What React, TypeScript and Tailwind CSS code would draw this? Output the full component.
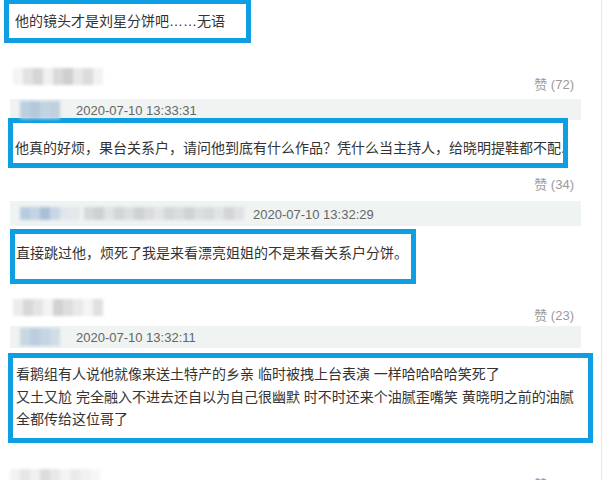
import React from 'react';

const font = { fontFamily: '"Liberation Sans", "Noto Sans CJK SC", sans-serif' };

// mosaic blocks standing in for blurred names / avatars
const Mosaic: React.FC<{ cells: string[]; h?: string }> = ({ cells, h = 'h-[16px]' }) => (
  <div className={`flex blur-[1.5px] ${h}`}>
    {cells.map((c, i) => (
      <div key={i} className="w-[10px] h-full" style={{ backgroundColor: c }} />
    ))}
  </div>
);

const nameCells = ['#f4f4f4', '#e2e2e2', '#d6d6d6', '#f0f0f0', '#dadada', '#cfcfcf', '#e8e8e8', '#dcdcdc', '#f2f2f2'];
const avatarCells = ['#bccfe0', '#b3c8dc', '#c2d3e2', '#bfd0df'];

const Likes: React.FC<{ n: number }> = ({ n }) => (
  <span className="text-[13px] leading-[16px] text-[#9a9a9a]">赞 ({n})</span>
);

const Bar: React.FC<{ children: React.ReactNode; className?: string }> = ({ children, className }) => (
  <div className={`ml-[10px] w-[571px] bg-[#eff3f2] flex items-center ${className ?? ''}`}>{children}</div>
);

const Date: React.FC<{ d: string }> = ({ d }) => (
  <span className="text-[13px] leading-[16px] text-[#666]">{d}</span>
);

export default function App() {
  return (
    <div className="w-[605px] h-[480px] overflow-hidden bg-white" style={font}>
      <div className="w-[602px] h-[480px] border-r border-[#e8e8e8] text-[#333]">
        <div className="ml-[4px] w-[247px] h-[43px] border-[5px] border-t-4 border-[#0d9fe1] pl-[6px] flex items-center text-[14px]">
          他的镜头才是刘星分饼吧……无语
        </div>

        <div className="mt-[25px] h-[18px] pl-[13px] pr-[27px] flex justify-between">
          <Mosaic cells={nameCells} h="h-[17px]" />
          <div className="mt-[4px]"><Likes n={72} /></div>
        </div>

        <Bar className="mt-[13px] h-[21px]">
          <div className="ml-[10px]"><Mosaic cells={avatarCells} h="h-[18px]" /></div>
          <div className="ml-[16px]"><Date d="2020-07-10 13:33:31" /></div>
        </Bar>

        <div className="-mt-[2px] ml-[8px] w-[560px] h-[50px] border-[5px] border-[#0d9fe1] pl-[2px] pb-[5px] flex items-end text-[14px] leading-[20px] whitespace-nowrap overflow-hidden">
          他真的好烦，果台关系户，请问他到底有什么作品？凭什么当主持人，给晓明提鞋都不配.
        </div>

        <div className="mt-[9px] h-[16px] pr-[27px] flex justify-end">
          <Likes n={34} />
        </div>

        <Bar className="mt-[8px] h-[25px]">
          <div className="ml-[10px] flex gap-[4px] items-center">
            <Mosaic cells={['#b8cce0', '#c4d4e3', '#a9c0d8', '#c8d7e5', '#dfe6ec', '#e4e8ea']} h="h-[13px]" />
            <Mosaic cells={['#d6d9da', '#cdd1d2', '#e0e3e3', '#d2d5d6', '#dcdfdf', '#cfd2d3', '#d9dcdc', '#e2e5e5', '#d4d7d8', '#dadddd', '#cfd3d4', '#dcdfe0', '#d7dadb', '#e1e4e4', '#d3d6d7', '#dfe1e2']} h="h-[13px]" />
          </div>
          <div className="ml-[9px]"><Date d="2020-07-10 13:32:29" /></div>
        </Bar>

        <div className="mt-[3px] ml-[10px] w-[406px] h-[55px] border-[5px] border-[#0d9fe1] pl-[1px] pt-[9px] text-[14px] leading-[20px] whitespace-nowrap">
          直接跳过他，烦死了我是来看漂亮姐姐的不是来看关系户分饼。
        </div>

        <div className="mt-[15px] h-[18px] pl-[13px] pr-[27px] flex justify-between">
          <Mosaic cells={['#ececec', '#d8d8d8', '#e4e4e4', '#f3f3f3', '#d2d2d2', '#dedede', '#e9e9e9', '#f4f4f4', '#e0e0e0']} h="h-[17px]" />
          <div className="mt-[4px]"><Likes n={23} /></div>
        </div>

        <Bar className="mt-[9px] h-[22px]">
          <div className="ml-[10px]"><Mosaic cells={['#c9d7e3', '#bccde0', '#c6d5e2', '#d0dce6']} h="h-[18px]" /></div>
          <div className="ml-[16px]"><Date d="2020-07-10 13:32:11" /></div>
        </Bar>

        <div className="mt-[5px] ml-[8px] w-[585px] h-[90px] border-[5px] border-[#0d9fe1] pl-[3px] pt-[5px] text-[14px] leading-[22.5px]">
          <div>看鹅组有人说他就像来送土特产的乡亲 临时被拽上台表演 一样哈哈哈哈笑死了</div>
          <div>又土又尬 完全融入不进去还自以为自己很幽默 时不时还来个油腻歪嘴笑 黄晓明之前的油腻</div>
          <div>全都传给这位哥了</div>
        </div>

        <div className="mt-[26px] h-[18px] pl-[10px] pr-[27px] flex justify-between">
          <Mosaic cells={['#f2f2f2', '#e6e6e6', '#f0f0f0', '#dcdcdc', '#e8e8e8', '#f4f4f4', '#eaeaea', '#f1f1f1', '#f6f6f6']} h="h-[17px]" />
          <div className="mt-[3px]"><Likes n={15} /></div>
        </div>
      </div>
    </div>
  );
}
